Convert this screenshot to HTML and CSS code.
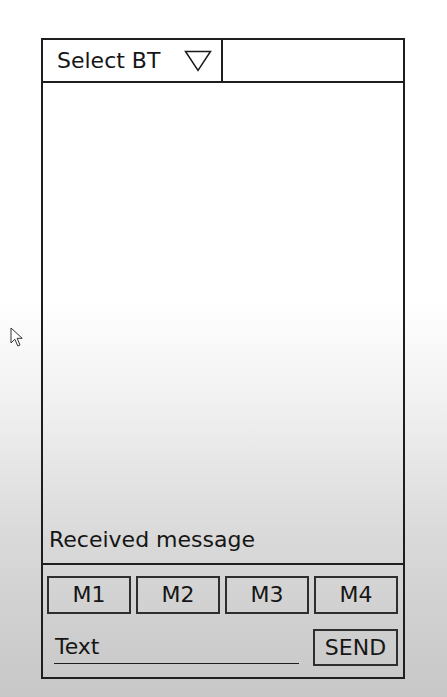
FILE: index.html
```html
<!DOCTYPE html>
<html>
<head>
<meta charset="utf-8">
<link rel="stylesheet" href="styles.css">
</head>
<body>
<div class="page">
  <div class="frame">
    <div class="header">
      <div class="select">
        <span class="select-label">Select BT</span>
        <svg class="tri" width="28" height="22" viewBox="0 0 28 22"><path d="M1.5 1.5 H26.5 L14 20.5 Z" fill="none" stroke="#1a1a1a" stroke-width="1.5" stroke-linejoin="miter"/></svg>
      </div>
    </div>
    <div class="main">
      <div class="received">Received message</div>
    </div>
    <div class="panel">
      <div class="macros">
        <div class="btn">M1</div>
        <div class="btn">M2</div>
        <div class="btn">M3</div>
        <div class="btn">M4</div>
      </div>
      <div class="send-row">
        <div class="text-input">Text</div>
        <div class="btn send">SEND</div>
      </div>
    </div>
  </div>
  <svg class="cursor" width="15" height="21" viewBox="0 0 15 21"><path d="M1 1 L1 16 L4.8 12.2 L7.8 19 L10 18 L7.1 11.3 L12.2 11.3 Z" fill="#fff" stroke="#333" stroke-width="1" stroke-linejoin="round"/></svg>
</div>
</body>
</html>
```

FILE: styles.css
```css
html, body {
  margin: 0;
  padding: 0;
}
body {
  width: 447px;
  height: 697px;
  overflow: hidden;
  font-family: "DejaVu Sans", Verdana, sans-serif;
  color: #161616;
  background: linear-gradient(to bottom, #ffffff 0px, #ffffff 300px, #f1f1f1 400px, #d9d9d9 540px, #c7c7c7 697px);
}
.page {
  position: relative;
  height: 697px;
  padding-top: 38px;
  box-sizing: border-box;
}
.frame {
  margin-left: 41px;
  width: 364px;
  height: 641px;
  box-sizing: border-box;
  border: 2px solid #1e1e1e;
  display: flex;
  flex-direction: column;
}
.header {
  height: 43px;
  box-sizing: border-box;
  border-bottom: 2px solid #1e1e1e;
  display: flex;
}
.select {
  width: 180px;
  box-sizing: border-box;
  border-right: 2px solid #1e1e1e;
  display: flex;
  align-items: center;
  padding-left: 14px;
}
.select-label {
  font-size: 22px;
  line-height: 26px;
}
.tri {
  margin-left: 24px;
  margin-top: 1px;
}
.main {
  flex: 1;
  display: flex;
  flex-direction: column;
  justify-content: flex-end;
  border-bottom: 2px solid #1e1e1e;
}
.received {
  font-size: 22px;
  line-height: 26px;
  padding-left: 6px;
  padding-bottom: 10px;
}
.panel {
  height: 112px;
  box-sizing: border-box;
  padding: 11px 5px 0 4px;
}
.macros {
  display: grid;
  grid-template-columns: repeat(4, 1fr);
  gap: 5px;
}
.btn {
  height: 38px;
  box-sizing: border-box;
  border: 2px solid #2e2e2e;
  display: flex;
  align-items: center;
  justify-content: center;
  font-size: 22px;
  line-height: 26px;
}
.send-row {
  display: flex;
  justify-content: space-between;
  margin-top: 15px;
}
.text-input {
  margin-left: 7px;
  width: 245px;
  height: 35px;
  box-sizing: border-box;
  border-bottom: 1px solid #1e1e1e;
  font-size: 22px;
  line-height: 26px;
  padding-top: 5px;
  padding-left: 1px;
}
.send {
  width: 85px;
  height: 37px;
}
.cursor {
  position: absolute;
  left: 10px;
  top: 327px;
}
```
